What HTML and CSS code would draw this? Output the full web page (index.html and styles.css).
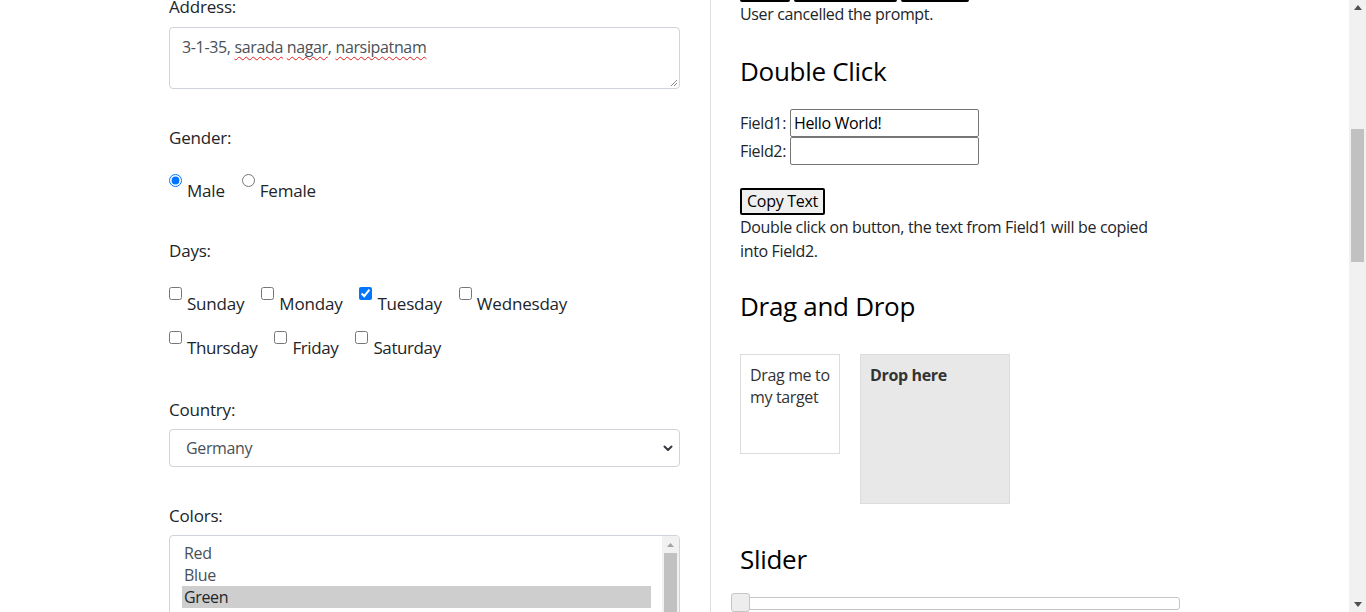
FILE: index.html
```html
<!DOCTYPE html>
<html lang="en">
<head>
<meta charset="utf-8">
<title>Automation Practice</title>
<link rel="stylesheet" href="styles.css">
</head>
<body>
<div class="screen">
  <div class="page">
    <div class="content">
      <div class="col-left">
        <div class="group">
          <label class="label lbl-input">Address:</label>
          <div class="textarea">3-1-35, <span class="sp">sarada</span> <span class="sp">nagar</span>, <span class="sp">narsipatnam</span>
            <svg class="grip" width="8" height="8" viewBox="0 0 8 8"><path d="M7 1 L1 7 M7 4 L4 7" stroke="#8a8a8a" stroke-width="1" fill="none"/></svg>
          </div>
        </div>
        <div class="group">
          <label class="label lbl-opts">Gender:</label>
          <div class="opts">
            <label class="opt"><input type="radio" name="g" checked><span class="opt-text">Male</span></label>
            <label class="opt"><input type="radio" name="g"><span class="opt-text">Female</span></label>
          </div>
        </div>
        <div class="group">
          <label class="label lbl-opts">Days:</label>
          <div class="opts">
            <label class="opt"><input type="checkbox"><span class="opt-text">Sunday</span></label>
            <label class="opt"><input type="checkbox"><span class="opt-text">Monday</span></label>
            <label class="opt"><input type="checkbox" checked><span class="opt-text">Tuesday</span></label>
            <label class="opt"><input type="checkbox"><span class="opt-text">Wednesday</span></label>
          </div>
          <div class="opts opts-2">
            <label class="opt"><input type="checkbox"><span class="opt-text">Thursday</span></label>
            <label class="opt"><input type="checkbox"><span class="opt-text">Friday</span></label>
            <label class="opt"><input type="checkbox"><span class="opt-text">Saturday</span></label>
          </div>
        </div>
        <div class="group">
          <label class="label lbl-input">Country:</label>
          <div class="select">
            <span>Germany</span>
            <svg class="chev" width="10" height="7" viewBox="0 0 10 7"><path d="M1.5 1.5 L5 5 L8.5 1.5" stroke="#343a40" stroke-width="2" fill="none" stroke-linecap="round" stroke-linejoin="round"/></svg>
          </div>
        </div>
        <div class="group">
          <label class="label lbl-input">Colors:</label>
          <div class="listbox">
            <div class="options">
              <div class="option">Red</div>
              <div class="option">Blue</div>
              <div class="option selected">Green</div>
              <div class="option">Yellow</div>
            </div>
            <div class="lb-scroll">
              <svg class="lb-up" width="7" height="4" viewBox="0 0 7 4"><path d="M0 4 L3.5 0 L7 4 Z" fill="#a3a3a3"/></svg>
              <div class="lb-thumb"></div>
            </div>
          </div>
        </div>
      </div>

      <div class="col-right">
        <div class="btn-row">
          <button class="btn">Alert</button>
          <button class="btn">Confirm Box</button>
          <button class="btn">Prompt</button>
        </div>
        <p class="status">User cancelled the prompt.</p>

        <h3 class="h-dbl">Double Click</h3>
        <div class="fields">
          <div class="field"><span>Field1:</span><input class="txt" type="text" value="Hello World!"></div>
          <div class="field"><span>Field2:</span><input class="txt" type="text" value=""></div>
        </div>
        <button class="btn btn-copy">Copy Text</button>
        <p class="note">Double click on button, the text from Field1 will be copied into Field2.</p>

        <h3 class="h-dnd">Drag and Drop</h3>
        <div class="dnd">
          <div class="drag">Drag me to my target</div>
          <div class="drop"><b>Drop here</b></div>
        </div>

        <h3 class="h-slider">Slider</h3>
        <div class="slider"><span class="handle"></span></div>
      </div>
    </div>
  </div>
  <div class="vscroll">
    <svg class="vs-up" width="8" height="5" viewBox="0 0 8 5"><path d="M0 5 L4 0 L8 5 Z" fill="#505050"/></svg>
    <div class="vs-track"><div class="vs-thumb"></div></div>
    <svg class="vs-down" width="8" height="5" viewBox="0 0 8 5"><path d="M0 0 L4 5 L8 0 Z" fill="#505050"/></svg>
  </div>
</div>
</body>
</html>
```
FILE: styles.css
```css
* { box-sizing: border-box; }
html, body { margin: 0; padding: 0; }
body {
  font-family: "Open Sans", "Noto Sans", sans-serif;
  font-size: 16px;
  letter-spacing: -0.35px;
  color: #212529;
  background: #fff;
}
.screen {
  display: flex;
  width: 1366px;
  height: 612px;
  overflow: hidden;
}
.page {
  width: 1349px;
  height: 612px;
  overflow: hidden;
}
.content {
  display: flex;
  align-items: stretch;
  margin-top: -40px;
  padding-bottom: 200px;
}

/* left column */
.col-left {
  margin-left: 169px;
  width: 541px;
  padding-right: 30px;
  padding-top: 32.5px;
}
.group { margin-bottom: 34.5px; }
.label {
  display: block;
  font-size: 17px;
  line-height: 27px;
  letter-spacing: -0.2px;
  color: #212529;
}
.lbl-input { margin-bottom: 6.5px; }
.lbl-opts { margin-bottom: 23.5px; }
.group:first-child .lbl-input { margin-bottom: 7.5px; }

.textarea {
  position: relative;
  height: 62px;
  border: 1px solid #ced4da;
  border-radius: 4px;
  padding: 7px 12px;
  line-height: 24px;
  color: #495057;
}
.sp {
  text-decoration: underline wavy #e02020;
  text-decoration-thickness: 1px;
  text-underline-offset: 3px;
  text-decoration-skip-ink: none;
}
.grip { position: absolute; right: 1px; bottom: 1px; }

.opts {
  display: flex;
  gap: 17px;
}
.opts-2 { margin-top: 14.5px; }
.opt {
  display: flex;
  align-items: flex-start;
  gap: 5px;
}
.opt input {
  margin: 0;
  width: 13px;
  height: 13px;
  flex: none;
}
.opt-text {
  padding-top: 2.5px;
  font-size: 17px;
  line-height: 27px;
  letter-spacing: -0.2px;
}
.opts-2 .opt-text { letter-spacing: -0.4px; }
.group:nth-child(2) { margin-bottom: 33px; }
.group:nth-child(3) { margin-bottom: 35px; }

.select {
  display: flex;
  align-items: center;
  justify-content: space-between;
  height: 38px;
  border: 1px solid #ced4da;
  border-radius: 4px;
  padding: 0 6px 0 16px;
  color: #495057;
}
.listbox {
  display: flex;
  height: 120px;
  border: 1px solid #ced4da;
  border-radius: 4px;
  overflow: hidden;
}
.options {
  flex: 1;
  padding: 6px 11px 0 12px;
}
.option {
  height: 22px;
  line-height: 22px;
  padding-left: 2px;
  color: #495057;
}
.option.selected { background: #cecece; color: #212529; }
.lb-scroll {
  width: 17px;
  background: #f1f1f1;
  display: flex;
  flex-direction: column;
  align-items: center;
  padding-top: 7px;
}
.lb-thumb {
  margin-top: 6px;
  width: 13px;
  height: 90px;
  background: #c1c1c1;
}

/* right column */
.col-right {
  border-left: 1px solid #dedede;
  padding-left: 29px;
  width: 470px;
  padding-top: 15px;
}
.btn {
  font-family: inherit;
  font-size: 16px;
  letter-spacing: -0.35px;
  white-space: nowrap;
  color: #000;
  background: #efefef;
  border: 2px solid #000;
  border-radius: 2px;
  height: 27px;
  padding: 0 3px;
  margin: 0;
  line-height: 23px;
}
.btn-row { display: flex; gap: 4px; }
.btn-row .btn:nth-child(1) { width: 50px; }
.btn-row .btn:nth-child(2) { width: 103px; }
.btn-row .btn:nth-child(3) { width: 68px; }
.status { margin: 0; line-height: 24px; }
h3 {
  font-weight: 400;
  font-size: 26px;
  line-height: 34px;
  letter-spacing: -0.3px;
  margin: 0;
  color: #000;
}
.h-dbl { margin-top: 28px; }
.fields { margin-top: 21px; }
.field {
  display: flex;
  align-items: center;
  gap: 4px;
  height: 28px;
}
.txt {
  width: 189px;
  height: 28px;
  border: 1px solid #767676;
  border-radius: 2px;
  padding: 1px 3px;
  font-family: inherit;
  font-size: 16px;
  letter-spacing: -0.35px;
  color: #000;
  margin: 0;
}
.btn-copy { margin-top: 23px; width: 85px; display: block; letter-spacing: -0.3px; }
.note { margin: 0; line-height: 24px; width: 420px; }
.h-dnd { margin-top: 26px; }
.dnd { display: flex; gap: 20px; margin-top: 31px; align-items: flex-start; }
.drag {
  width: 100px;
  height: 100px;
  border: 1px solid #dcdcdc;
  padding: 9px 9px;
  line-height: 22px;
  color: #333;
}
.drop {
  width: 150px;
  height: 150px;
  border: 1px solid #dcdcdc;
  background: #e8e8e8;
  padding: 9px 9px;
  line-height: 22px;
  color: #333;
}
.h-slider { margin-top: 38px; }
.slider {
  position: relative;
  margin-top: 21px;
  width: 440px;
  height: 13px;
  border: 1px solid #c5c5c5;
  border-radius: 3px;
  background: #fff;
}
.handle {
  position: absolute;
  left: -10px;
  top: -5px;
  width: 19px;
  height: 19px;
  border: 1px solid #c5c5c5;
  border-radius: 3px;
  background: #ededed;
}

/* page scrollbar */
.vscroll {
  width: 17px;
  height: 612px;
  background: #f1f1f1;
  display: flex;
  flex-direction: column;
  align-items: center;
}
.vs-up { margin-top: 5px; flex: none; }
.vs-track { flex: 1; width: 100%; padding: 119px 2px 0; }
.vs-thumb { width: 13px; height: 133px; background: #c1c1c1; }
.vs-down { margin-bottom: 5px; flex: none; }
```
